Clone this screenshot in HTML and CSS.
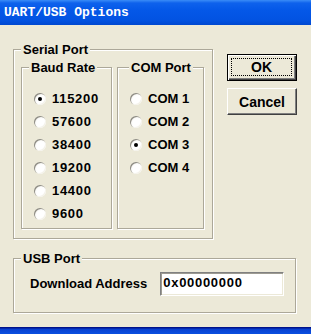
FILE: index.html
```html
<!DOCTYPE html>
<html>
<head>
<meta charset="utf-8">
<title>UART/USB Options</title>
<link rel="stylesheet" href="styles.css">
</head>
<body>
<div class="window">
  <div class="titlebar">UART/USB Options</div>
  <div class="client">
    <div class="top-row">
      <div class="group serial">
        <span class="group-title">Serial Port</span>
        <div class="sub-row">
          <div class="group baud">
            <span class="group-title">Baud Rate</span>
            <ul class="radios digits">
              <li><span class="radio checked"></span>115200</li>
              <li><span class="radio"></span>57600</li>
              <li><span class="radio"></span>38400</li>
              <li><span class="radio"></span>19200</li>
              <li><span class="radio"></span>14400</li>
              <li><span class="radio"></span>9600</li>
            </ul>
          </div>
          <div class="group com">
            <span class="group-title com-title">COM Port</span>
            <ul class="radios">
              <li><span class="radio"></span>COM 1</li>
              <li><span class="radio"></span>COM 2</li>
              <li><span class="radio checked"></span>COM 3</li>
              <li><span class="radio"></span>COM 4</li>
            </ul>
          </div>
        </div>
      </div>
      <div class="buttons">
        <div class="btn btn-default"><span class="focus">OK</span></div>
        <div class="btn">Cancel</div>
      </div>
    </div>
    <div class="group usb">
      <span class="group-title">USB Port</span>
      <div class="usb-row">
        <span class="field-label">Download Address</span>
        <div class="textbox">0x00000000</div>
      </div>
    </div>
  </div>
  <div class="bottom-frame"></div>
</div>
</body>
</html>
```
FILE: styles.css
```css
* { box-sizing: border-box; }
html, body { margin: 0; padding: 0; }
body {
  background: #ECE9D8;
  font: bold 13px/16px "Liberation Sans", Arial, sans-serif;
  color: #000;
}
.window {
  width: 311px;
  height: 334px;
  display: flex;
  flex-direction: column;
  overflow: hidden;
}
.titlebar {
  flex: none;
  height: 25px;
  padding-left: 4px;
  font: bold 13px/25px "Liberation Mono", "DejaVu Sans Mono", monospace;
  color: #fff;
  background: linear-gradient(to bottom, #3A8CF7 0, #0E62EC 3px, #0458E8 40%, #0253E2 80%, #0048D0 100%);
}
.client {
  flex: 1;
  padding: 24px 0 0 13px;
}
.top-row {
  display: flex;
  align-items: flex-start;
}
.group {
  position: relative;
  border: 1px solid #ACA899;
  box-shadow: inset 1px 1px 0 #fff, 1px 1px 0 #fff;
}
.group-title {
  position: absolute;
  top: -8px;
  left: 7px;
  padding: 0 2px;
  line-height: 16px;
  background: #ECE9D8;
  white-space: nowrap;
}
.com-title { left: 11px; }
.serial {
  width: 200px;
  padding: 17px 8px 9px 7px;
}
.sub-row {
  display: flex;
  gap: 5px;
}
.baud { width: 91px; }
.com { width: 87px; }
.radios {
  list-style: none;
  margin: 0;
  padding: 19px 0 3px 0;
  height: 160px;
}
.radios li {
  display: flex;
  align-items: center;
  height: 23px;
  padding-left: 12px;
}
.digits li { letter-spacing: 0.7px; }
.radio {
  flex: none;
  width: 12px;
  height: 12px;
  margin-right: 6px;
  border-radius: 50%;
  background: radial-gradient(circle at 62% 62%, #ffffff 0, #ffffff 45%, #e4e1d4 100%);
  box-shadow: inset 1px 1px 0 #8d8b82, inset -1px -1px 0 #f4f2ea;
  position: relative;
}
.radio.checked::after {
  content: "";
  position: absolute;
  left: 4px;
  top: 4px;
  width: 4px;
  height: 4px;
  border-radius: 50%;
  background: #000;
}
.buttons {
  margin: 5px 0 0 14px;
  display: flex;
  flex-direction: column;
  gap: 7px;
}
.btn {
  width: 70px;
  height: 27px;
  display: flex;
  align-items: center;
  justify-content: center;
  background: #ECE9D8;
  border: 1px solid;
  border-color: #fff #404040 #404040 #fff;
  box-shadow: inset -1px -1px 0 #808080;
  font-size: 14px;
}
.btn-default {
  border: 1px solid #000;
  box-shadow: inset 1px 1px 0 #fff, inset -1px -1px 0 #404040, inset -2px -2px 0 #808080;
  padding: 3px 4px 4px 3px;
}
.focus {
  flex: 1;
  align-self: stretch;
  display: flex;
  align-items: center;
  justify-content: center;
  border: 1px dotted #000;
}
.usb {
  width: 283px;
  margin-top: 19px;
  padding: 13px 0 16px 16px;
}
.usb-row {
  display: flex;
  align-items: center;
  gap: 13px;
}
.textbox {
  width: 124px;
  height: 24px;
  padding-left: 2px;
  line-height: 20px;
  letter-spacing: 0.7px;
  background: #fff;
  border: 1px solid;
  border-color: #808080 #fff #fff #808080;
  box-shadow: inset 1px 1px 0 #9d9b92, inset -1px -1px 0 #ECE9D8;
}
.bottom-frame {
  flex: none;
  height: 7px;
  margin-top: auto;
  background: linear-gradient(to bottom, #00138C 0, #00138C 1px, #0840D0 2px, #0A4FE0 100%);
}
```
